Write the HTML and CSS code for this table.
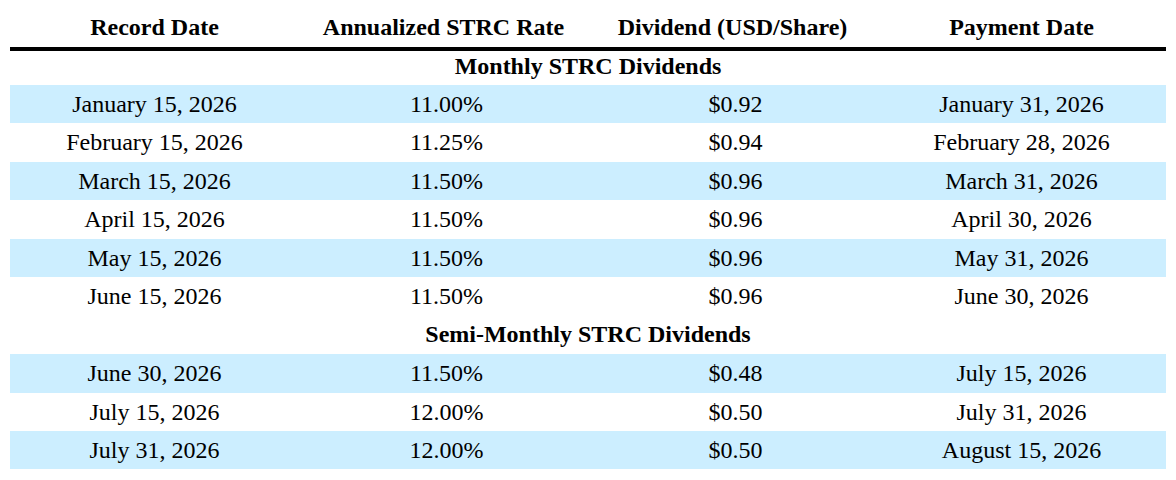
FILE: index.html
```html
<!DOCTYPE html>
<html lang="en">
<head>
<meta charset="utf-8">
<title>STRC Dividends</title>
<link rel="stylesheet" href="styles.css">
</head>
<body>
<div class="table">
  <div class="row head">
    <div>Record Date</div>
    <div>Annualized STRC Rate</div>
    <div>Dividend (USD/Share)</div>
    <div>Payment Date</div>
  </div>
  <div class="section first">Monthly STRC Dividends</div>
  <div class="row shade"><div>January 15, 2026</div><div class="num">11.00%</div><div class="num">$0.92</div><div>January 31, 2026</div></div>
  <div class="row"><div>February 15, 2026</div><div class="num">11.25%</div><div class="num">$0.94</div><div>February 28, 2026</div></div>
  <div class="row shade"><div>March 15, 2026</div><div class="num">11.50%</div><div class="num">$0.96</div><div>March 31, 2026</div></div>
  <div class="row"><div>April 15, 2026</div><div class="num">11.50%</div><div class="num">$0.96</div><div>April 30, 2026</div></div>
  <div class="row shade"><div>May 15, 2026</div><div class="num">11.50%</div><div class="num">$0.96</div><div>May 31, 2026</div></div>
  <div class="row"><div>June 15, 2026</div><div class="num">11.50%</div><div class="num">$0.96</div><div>June 30, 2026</div></div>
  <div class="section">Semi-Monthly STRC Dividends</div>
  <div class="row shade"><div>June 30, 2026</div><div class="num">11.50%</div><div class="num">$0.48</div><div>July 15, 2026</div></div>
  <div class="row"><div>July 15, 2026</div><div class="num">12.00%</div><div class="num">$0.50</div><div>July 31, 2026</div></div>
  <div class="row shade"><div>July 31, 2026</div><div class="num">12.00%</div><div class="num">$0.50</div><div>August 15, 2026</div></div>
</div>
</body>
</html>
```
FILE: styles.css
```css
html, body {
  margin: 0;
  padding: 0;
  background: #ffffff;
}
body {
  font-family: "Liberation Serif", "Times New Roman", serif;
  font-size: 24px;
  color: #000000;
}
.table {
  width: 1156px;
  margin-left: 10px;
}
.row {
  display: grid;
  grid-template-columns: repeat(4, 1fr);
  height: 38.44px;
  line-height: 38.44px;
  text-align: center;
  white-space: nowrap;
}
.row.shade {
  background: #cceeff;
}
.row .num {
  padding-left: 6px;
}
.row.head {
  height: 40px;
  line-height: 40px;
  padding-top: 7px;
  font-weight: bold;
  border-bottom: 4px solid #000000;
}
.section {
  height: 36.44px;
  line-height: 36.44px;
  padding-bottom: 2px;
  text-align: center;
  font-weight: bold;
}
.section.first {
  height: 30px;
  line-height: 30px;
  padding-bottom: 4px;
}
```
